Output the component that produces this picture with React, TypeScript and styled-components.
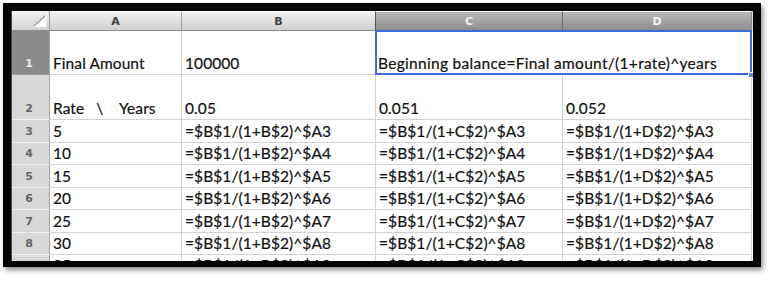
import React from "react";
import styled, { createGlobalStyle, css } from "styled-components";

const Global = createGlobalStyle`
  html, body { margin: 0; padding: 0; background: #ffffff; }
  #root { width: 776px; height: 281px; overflow: hidden; }
`;

const Page = styled.div`
  padding: 3px;
  box-sizing: border-box;
  width: 776px;
  height: 281px;
`;

const Frame = styled.div`
  display: inline-block;
  border-style: solid;
  border-color: #050505;
  border-width: 8px 8px 6px 8px;
  box-shadow: 2px 3px 5px rgba(0, 0, 0, 0.45);
  background: #ffffff;
`;

const Sheet = styled.div`
  display: grid;
  grid-template-columns: 38px 132px 194px 187px 189px 1px;
  grid-template-rows: 20px 44px 45px 23px 22px 23px 22px 23px 22px 22px;
  width: 742px;
  height: 250px;
  overflow: hidden;
  border-left: 1px solid #454862;
  box-sizing: border-box;
  font-family: Lato, "Liberation Sans", sans-serif;
  font-size: 15.5px;
  letter-spacing: 0.08px;
  color: #111111;
  -webkit-text-stroke: 0.2px #111111;
`;

const headerFont = css`
  font-family: "DejaVu Sans", "Liberation Sans", sans-serif;
  font-weight: bold;
  font-size: 11px;
  letter-spacing: 0;
  -webkit-text-stroke: 0;
`;

const Corner = styled.div`
  box-sizing: border-box;
  display: flex;
  justify-content: flex-end;
  align-items: flex-end;
  padding: 0 3px 3px 0;
  background: linear-gradient(#f2f2f2, #d2d2d2);
  border-right: 1px solid #9a9a9a;
  border-bottom: 1px solid #8c8c8c;
`;

const CornerMark = styled.div`
  width: 0;
  height: 0;
  border-left: 12px solid transparent;
  border-bottom: 11px solid #fbfbfb;
  filter: drop-shadow(-1px -1px 0 #9c9c9c);
`;

const ColHead = styled.div<{ $active?: boolean; $edge?: string }>`
  ${headerFont};
  box-sizing: border-box;
  display: flex;
  align-items: center;
  justify-content: center;
  padding-top: 1px;
  background: ${(p) =>
    p.$active
      ? "linear-gradient(#b9b9b9, #8d8d8d)"
      : "linear-gradient(#f1f1f1, #d0d0d0)"};
  color: ${(p) => (p.$active ? "#f2f2f2" : "#404040")};
  border-right: 1px solid ${(p) => p.$edge || "#a8a8a8"};
  border-bottom: 1px solid #8a8a8a;
  border-top: 1px solid #fdfdfd;
`;

const RowHead = styled.div<{ $active?: boolean }>`
  ${headerFont};
  box-sizing: border-box;
  display: flex;
  align-items: flex-end;
  justify-content: center;
  padding: 0 3px 4px 0;
  background: ${(p) => (p.$active ? "#8a8a8a" : "#d8d8d8")};
  color: ${(p) => (p.$active ? "#e8e8e8" : "#646464")};
  border-right: 1px solid #a4a4a4;
  border-bottom: 1px solid ${(p) => (p.$active ? "#9a9a9a" : "#f3f3f3")};
`;

const Cell = styled.div`
  box-sizing: border-box;
  display: flex;
  align-items: flex-end;
  padding: 0 3px 2px 3px;
  line-height: 18px;
  white-space: pre;
  overflow: hidden;
  border-right: 1px solid #d3d3d3;
  border-bottom: 1px solid #d3d3d3;
`;

const Sliver = styled.div<{ $head?: boolean }>`
  background: ${(p) => (p.$head ? "#d8d8d8" : "#ffffff")};
`;

const Selection = styled.div`
  grid-column: span 2;
  position: relative;
  box-sizing: border-box;
  display: flex;
  align-items: flex-end;
  padding: 0 3px 2px 2px;
  line-height: 18px;
  letter-spacing: 0.3px;
  white-space: pre;
  border-bottom: 1px solid #d3d3d3;
  &::after {
    content: "";
    position: absolute;
    left: -1px;
    top: -1px;
    right: 0;
    bottom: -1px;
    border: 2px solid #3b6bd3;
    pointer-events: none;
  }
`;

const Handle = styled.span`
  position: absolute;
  right: -2px;
  bottom: -4px;
  width: 6px;
  height: 6px;
  background: #5b88e0;
  border: 1px solid #ffffff;
  box-sizing: border-box;
  z-index: 1;
`;

const rates = ["B", "C", "D"];
const years = [5, 10, 15, 20, 25, 30, 35];

export default function App() {
  return (
    <Page>
      <Global />
      <Frame>
        <Sheet>
          <Corner>
            <CornerMark />
          </Corner>
          <ColHead $edge="#9e9e9e">A</ColHead>
          <ColHead $edge="#555555">B</ColHead>
          <ColHead $active $edge="#6e6e6e">C</ColHead>
          <ColHead $active $edge="#8a8a8a">D</ColHead>
          <Sliver $head />

          <RowHead $active>1</RowHead>
          <Cell>Final Amount</Cell>
          <Cell>100000</Cell>
          <Selection>
            Beginning balance=Final amount/(1+rate)^years
            <Handle />
          </Selection>
          <Sliver />

          <RowHead>2</RowHead>
          <Cell>{"Rate   \\    Years"}</Cell>
          <Cell>0.05</Cell>
          <Cell>0.051</Cell>
          <Cell>0.052</Cell>
          <Sliver />

          {years.map((y, i) => (
            <React.Fragment key={y}>
              <RowHead>{i + 3}</RowHead>
              <Cell>{y}</Cell>
              {rates.map((c) => (
                <Cell key={c}>{`=$B$1/(1+${c}$2)^$A${i + 3}`}</Cell>
              ))}
              <Sliver />
            </React.Fragment>
          ))}
        </Sheet>
      </Frame>
    </Page>
  );
}
